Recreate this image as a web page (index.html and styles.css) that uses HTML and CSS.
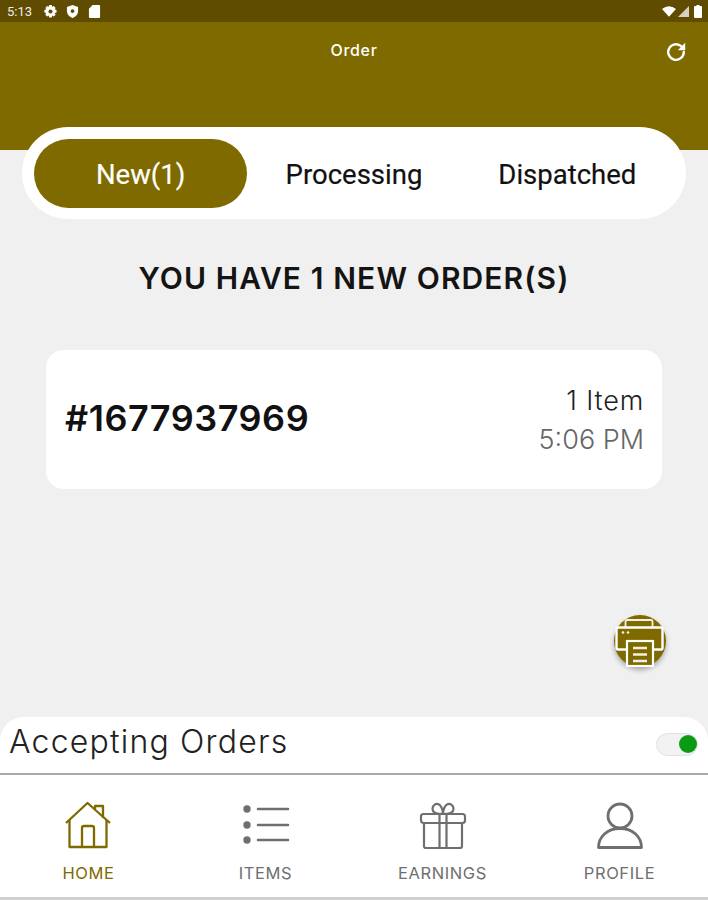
FILE: index.html
```html
<!DOCTYPE html>
<html>
	<head>
		<meta charset="UTF-8">
		<title>Order</title>
		<link rel="stylesheet" href="styles.css">
	</head>
	<body>
		<div class="app">
			<div class="status-bar">
				<div class="status-left">
					<span class="time">5:13</span>
					<svg class="st-icon" viewBox="0 0 14 14"><path fill="#fff" d="M5.600 0h2.800l.4 2 1.700-.9 2 2-1 1.600 2 .6v2.800l-2 .5 1 1.800-2 2-1.700-1-.4 2.100H5.600l-.5-2.100-1.700 1-2-2 1-1.800-2-.5V5.300l2-.6-1-1.600 2-2 1.700.9z"/><circle cx="7" cy="7" r="2.200" fill="#5f4c00"/></svg>
					<svg class="st-icon" viewBox="0 0 14 14"><path fill="#fff" d="M7 0l6 2.200v4.300c0 3.500-2.500 6.300-6 7.500-3.500-1.200-6-4-6-7.500V2.200z"/><circle cx="7" cy="6.500" r="2" fill="#5f4c00"/></svg>
					<svg class="st-icon" viewBox="0 0 14 14"><path fill="#fff" d="M5 0h7a1 1 0 0 1 1 1v12a1 1 0 0 1-1 1H2a1 1 0 0 1-1-1V4z"/></svg>
				</div>
				<div class="status-right">
					<svg class="wifi" viewBox="0 0 16 12"><path fill="#fff" d="M0 3Q8-3 16 3L8 12z"/></svg>
					<svg class="signal" viewBox="0 0 12 12"><path fill="#fff" opacity=".75" d="M12 0v12H0z"/></svg>
					<svg class="battery" viewBox="0 0 8 13"><path fill="#fff" d="M2.500 0h3v1H7a1 1 0 0 1 1 1v10a1 1 0 0 1-1 1H1a1 1 0 0 1-1-1V2a1 1 0 0 1 1-1h1.500z"/></svg>
				</div>
			</div>

			<div class="header">
				<span class="title">Order</span>
				<svg class="refresh" viewBox="0 0 24 24" fill="none" stroke="#fff" stroke-width="2.600" stroke-linecap="round"><path d="M20.500 12a8.500 8.500 0 1 1-2.600-6.100"/><path fill="#fff" stroke="none" d="M22 2v8h-8z"/></svg>
			</div>

			<div class="tabs">
				<div class="tab active">New(1)</div>
				<div class="tab">Processing</div>
				<div class="tab">Dispatched</div>
			</div>

			<h1 class="heading">YOU HAVE 1 NEW ORDER(S)</h1>

			<div class="order-card">
				<div class="order-id">#1677937969</div>
				<div class="order-info">
					<div class="order-items">1 Item</div>
					<div class="order-time">5:06 PM</div>
				</div>
			</div>

			<div class="spacer">
				<div class="print-btn">
					<svg viewBox="0 0 52 52">
						<rect x="11.500" y="5" width="27" height="9" rx="1.500" fill="none" stroke="#f6f1df" stroke-width="1.800"/>
						<rect x="2.500" y="12.500" width="46" height="22" rx="1.500" fill="#7f6a00" stroke="#fff" stroke-width="2.400"/>
						<circle cx="9" cy="17.500" r="1.300" fill="#f6f1df"/>
						<circle cx="14" cy="17.500" r="1.300" fill="#f6f1df"/>
						<rect x="13" y="26" width="26" height="25" fill="#7f6a00" stroke="#fff" stroke-width="2.200"/>
						<path d="M19 33h14M19 39.500h14M19 46h14" stroke="#f6f1df" stroke-width="2.400"/>
					</svg>
				</div>
			</div>

			<div class="accepting">
				<span class="accepting-label">Accepting Orders</span>
				<span class="switch"><span class="knob"></span></span>
			</div>

			<div class="nav">
				<div class="nav-item current">
					<svg viewBox="0 0 46 46" fill="none" stroke="#7f6a00" stroke-width="2.300" stroke-linejoin="round">
						<path d="M0 20L21.500 0 44 20"/>
						<path d="M3.500 17v27h37V17"/>
						<path d="M16 44V25a2 2 0 0 1 2-2h8a2 2 0 0 1 2 2v19"/>
						<path d="M29 6V3h8v12"/>
					</svg>
					<span>HOME</span>
				</div>
				<div class="nav-item">
					<svg viewBox="0 0 46 46" fill="none" stroke="#6f6f6f" stroke-width="2.600" stroke-linecap="round">
						<circle cx="4" cy="6" r="3.700" fill="#6f6f6f" stroke="none"/>
						<circle cx="4" cy="22" r="3.700" fill="#6f6f6f" stroke="none"/>
						<circle cx="4" cy="37" r="3.700" fill="#6f6f6f" stroke="none"/>
						<path d="M15 6h30M15 22h30M15 37h30"/>
					</svg>
					<span>ITEMS</span>
				</div>
				<div class="nav-item">
					<svg viewBox="0 0 46 46" fill="none" stroke="#6f6f6f" stroke-width="2.200" stroke-linejoin="round">
						<rect x="1" y="11" width="44" height="9" rx="2.500"/>
						<path d="M4 20v23a2 2 0 0 0 2 2h34a2 2 0 0 0 2-2V20"/>
						<path d="M19.500 11v34M26.500 11v34"/>
						<path d="M23 11c-5 0-10.500-.5-10.500-5 0-4 3.500-6 6.500-4.500 2 1 4 5 4 9.500 0-4.500 2-8.500 4-9.500 3-1.500 6.500.5 6.500 4.500 0 4.500-5.500 5-10.500 5z"/>
					</svg>
					<span>EARNINGS</span>
				</div>
				<div class="nav-item">
					<svg viewBox="0 0 46 46" fill="none" stroke="#6f6f6f" stroke-width="2.800" stroke-linejoin="round">
						<circle cx="23" cy="13" r="12"/>
						<path d="M1.500 44.500c0-10 8-19 21.500-19s21.500 9 21.500 19z"/>
					</svg>
					<span>PROFILE</span>
				</div>
			</div>
		</div>
	</body>
</html>
```

FILE: styles.css
```css
*{
	box-sizing: border-box;
}
html, body{
	margin: 0;
	padding: 0;
}
body{
	background-color: #f0f0f0;
	font-family: "Inter", "Liberation Sans", sans-serif;
}
.app{
	width: 708px;
	height: 900px;
	display: flex;
	flex-direction: column;
	overflow: hidden;
}

/* status bar */
.status-bar{
	height: 22px;
	flex: none;
	background-color: #5f4c00;
	color: #fff;
	display: flex;
	justify-content: space-between;
	align-items: center;
	padding: 0 6px 0 7px;
}
.status-left, .status-right{
	display: flex;
	align-items: center;
}
.time{
	font-family: "Roboto", sans-serif;
	font-size: 13px;
	width: 37px;
	opacity: .9;
}
.st-icon{
	width: 13px;
	height: 13px;
	margin-right: 9px;
}
.wifi{
	width: 14px;
	height: 11px;
	margin-right: 2px;
}
.signal{
	width: 11px;
	height: 11px;
	margin-right: 5px;
}
.battery{
	width: 8px;
	height: 13px;
}

/* header */
.header{
	height: 128px;
	flex: none;
	background-color: #7f6a00;
	color: #fff;
	display: flex;
	justify-content: center;
	position: relative;
	padding-top: 19px;
}
.title{
	font-size: 16px;
	font-weight: 500;
	letter-spacing: .7px;
	line-height: 18px;
}
.refresh{
	position: absolute;
	top: 19px;
	right: 21px;
	width: 22px;
	height: 22px;
}

/* tabs */
.tabs{
	flex: none;
	margin: -23px 22px 0;
	height: 92px;
	border-radius: 46px;
	background-color: #fff;
	padding: 12px;
	display: grid;
	grid-template-columns: repeat(3, 1fr);
	position: relative;
}
.tab{
	height: 69px;
	border-radius: 35px;
	display: flex;
	align-items: center;
	justify-content: center;
	padding-top: 2px;
	font-family: "Roboto", sans-serif;
	font-size: 27.500px;
	-webkit-text-stroke: .2px;
	color: #111;
}
.tab.active{
	background-color: #7f6a00;
	color: #fff;
}

.heading{
	flex: none;
	margin: 40px 0 0;
	height: 38px;
	line-height: 38px;
	text-align: center;
	font-size: 30px;
	font-weight: 600;
	letter-spacing: 1.1px;
	color: #141414;
}

/* order */
.order-card{
	flex: none;
	margin: 53px 46px 0;
	height: 139px;
	background-color: #fff;
	border-radius: 18px;
	display: flex;
	justify-content: space-between;
	align-items: center;
	padding: 0 18px 0 19px;
}
.order-id{
	font-size: 36px;
	font-weight: 600;
	letter-spacing: .5px;
	margin-bottom: 3px;
	color: #111;
}
.order-info{
	text-align: right;
	font-size: 27px;
	line-height: 39px;
	font-weight: 300;
}
.order-items{
	color: #222;
	letter-spacing: .8px;
}
.order-time{
	color: #666;
}

.spacer{
	flex: 1;
	position: relative;
}
.print-btn{
	position: absolute;
	top: 126px;
	left: 614px;
	width: 52px;
	height: 52px;
	border-radius: 50%;
	background-color: #7f6a00;
	box-shadow: 0 3px 5px rgba(0,0,0,.3);
}
.print-btn svg{
	display: block;
	width: 52px;
	height: 52px;
}

/* accepting orders */
.accepting{
	flex: none;
	height: 58px;
	background-color: #fff;
	border-radius: 24px 24px 0 0;
	border-bottom: 2px solid #a8a8a8;
	display: flex;
	justify-content: space-between;
	align-items: center;
	padding: 0 10px 8px 9px;
}
.accepting-label{
	font-size: 32px;
	font-weight: 300;
	color: #222;
	letter-spacing: 1.200px;
}
.switch{
	width: 42px;
	height: 23px;
	border-radius: 12px;
	background-color: #f2f2f2;
	border: 1px solid #e2e2e2;
	display: flex;
	justify-content: flex-end;
	align-items: center;
	margin: 6px 0 0;
}
.knob{
	width: 18px;
	height: 18px;
	border-radius: 50%;
	background-color: #0b9b12;
}

/* bottom nav */
.nav{
	flex: none;
	height: 125px;
	background-color: #fff;
	border-bottom: 3px solid #cfcfcf;
	display: grid;
	grid-template-columns: repeat(4, 177px);
	color: #6f6f6f;
}
.nav-item{
	display: flex;
	flex-direction: column;
	align-items: center;
	padding-top: 28px;
	font-size: 16.500px;
	font-weight: 400;
	letter-spacing: .6px;
}
.nav-item svg{
	width: 46px;
	height: 46px;
	margin-bottom: 14px;
	overflow: visible;
}
.nav-item.current{
	color: #7f6a00;
}
```
